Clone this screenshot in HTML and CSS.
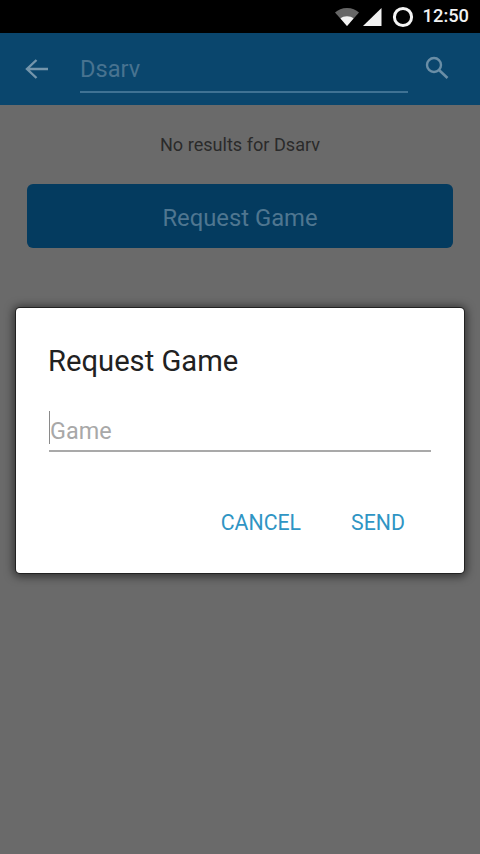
FILE: index.html
```html
<!DOCTYPE html>
<html lang="en">
<head>
<meta charset="utf-8">
<title>Request Game</title>
<link rel="stylesheet" href="styles.css">
</head>
<body>
<div class="screen">
  <div class="statusbar">
    <svg class="ic-wifi" width="24" height="18" viewBox="0 0 24 18"><path class="dim" d="M0 4.500C3 1.800 7 0 12 0s9 1.800 12 4.500L12 18z"/><path class="bright" d="M5.500 10.500C7 9.200 9.300 8.300 12 8.300s5 .9 6.500 2.200L12 18z"/></svg>
    <svg class="ic-signal" width="20" height="20" viewBox="0 0 20 20"><path class="bright" d="M19.500 1v18H1z"/></svg>
    <svg class="ic-circle" width="22" height="22" viewBox="0 0 22 22"><circle cx="11" cy="11" r="8.600" fill="none" stroke="#f4f4f4" stroke-width="3"/></svg>
    <span class="clock">12:50</span>
  </div>
  <header class="appbar">
    <svg class="ic-back" width="26" height="24" viewBox="0 0 26 24"><path d="M24 12H3M12.500 3 3 12l9.500 9" fill="none" stroke="#7495ab" stroke-width="2.400"/></svg>
    <div class="search-field">Dsarv</div>
    <svg class="ic-search" width="26" height="26" viewBox="0 0 26 26"><circle cx="10" cy="10" r="7" fill="none" stroke="#6a8ea6" stroke-width="2.400"/><path d="m15 15 8.500 8" stroke="#6a8ea6" stroke-width="2.600"/></svg>
  </header>
  <main class="results">
    <p class="empty">No results for Dsarv</p>
    <div class="request-btn">Request Game</div>
  </main>
  <div class="dialog">
    <h2 class="dialog-title">Request Game</h2>
    <div class="dialog-input"><span class="caret"></span><span class="placeholder">Game</span></div>
    <div class="dialog-actions">
      <span class="action">CANCEL</span>
      <span class="action">SEND</span>
    </div>
  </div>
</div>
</body>
</html>
```
FILE: styles.css
```css
* { box-sizing: border-box; }
html, body { margin: 0; padding: 0; }
body { font-family: Roboto, "Liberation Sans", sans-serif; background: #6a6a6a; }
.screen { position: relative; width: 480px; height: 854px; overflow: hidden; background: #6a6a6a; display: flex; flex-direction: column; }
.statusbar { height: 33px; background: #000; display: flex; align-items: center; justify-content: flex-end; padding-right: 11px; flex: none; }
.dim { fill: #666; }
.bright { fill: #f2f2f2; }
.ic-wifi { margin-right: 3px; }
.ic-signal { margin-right: 10px; }
.ic-circle { margin-right: 9px; }
.clock { color: #f2f2f2; font-size: 18.300px; font-weight: 500; line-height: 1; }
.appbar { height: 72px; background: #0a466d; display: flex; align-items: center; padding: 0 30px 0 24px; flex: none; }
.ic-back { flex: none; margin-right: 30px; margin-top: -1px; }
.search-field { width: 328px; height: 46px; margin-top: 2px; border-bottom: 2px solid #3f7294; color: #487390; font-size: 23.600px; line-height: 44px; flex: none; }
.ic-search { flex: none; margin-left: 16px; margin-top: -3px; }
.results { padding: 0 27px; display: flex; flex-direction: column; }
.empty { margin: 30px 0 0; text-align: center; font-size: 18.100px; line-height: 20px; color: #2a2a2a; }
.request-btn { margin-top: 29px; height: 64px; background: #043b5f; border-radius: 6px; color: #4f7690; font-size: 23.800px; line-height: 68px; text-align: center; }
.dialog { position: absolute; left: 16px; top: 308px; width: 448px; height: 265px; background: #fff; border-radius: 4px; box-shadow: 0 0 0 1px #222, 0 1px 8px 3px rgba(0,0,0,.5); padding: 0 33px; display: flex; flex-direction: column; }
.dialog-title { margin: 36px 0 0 -1px; font-size: 29.200px; line-height: 34px; font-weight: 400; color: #212121; }
.dialog-input { margin-top: 30px; height: 44px; width: 382px; border-bottom: 2px solid #a9a9a9; display: flex; align-items: center; position: relative; }
.caret { width: 1px; height: 33px; background: #8a8a8a; flex: none; margin-top: -4px; }
.placeholder { font-size: 23.400px; color: #a8a8a8; margin-top: 3px; }
.dialog-actions { display: flex; justify-content: flex-end; gap: 50px; margin-top: 59px; padding-right: 26px; width: 382px; }
.action { color: #2f95c4; font-size: 21.300px; line-height: 24px; }
```
